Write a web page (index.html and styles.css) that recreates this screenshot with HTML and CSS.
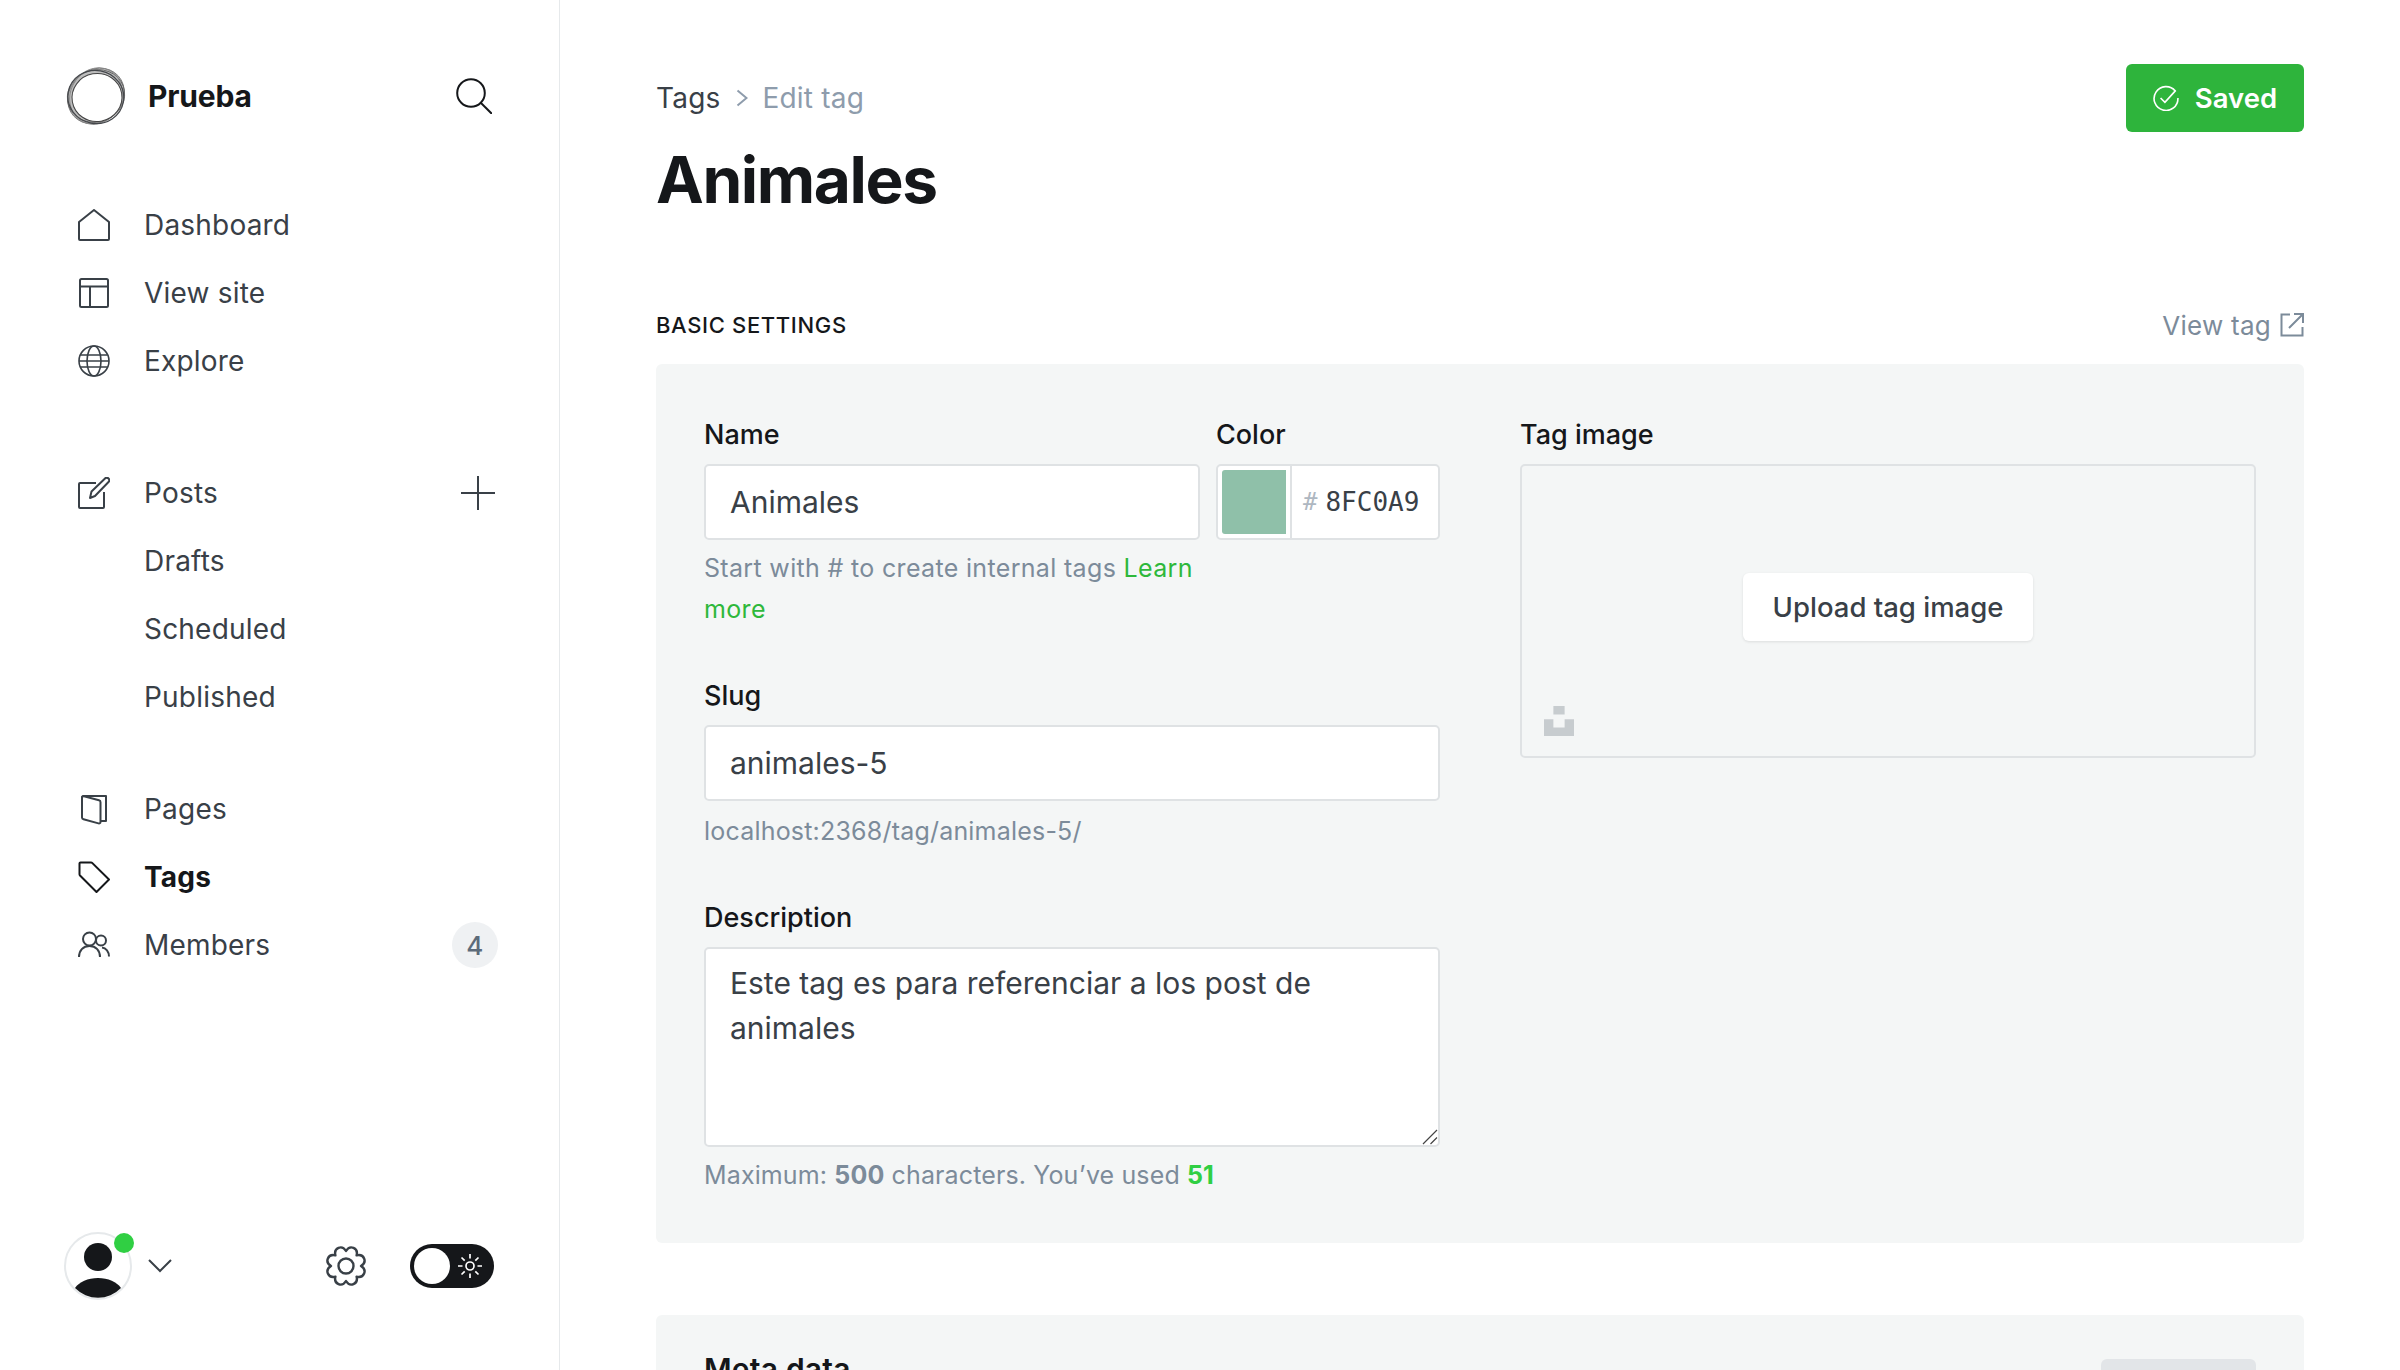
FILE: index.html
```html
<!DOCTYPE html>
<html lang="en">
<head>
<meta charset="utf-8">
<title>Animales - Tags</title>
<link rel="stylesheet" href="styles.css">
</head>
<body>
<div class="app">
  <aside class="sidebar">
    <div class="brand">
      <div class="brand-left">
        <svg class="logo" viewBox="0 0 60 60" fill="none" stroke="#3a3d42">
          <ellipse cx="30" cy="30" rx="30" ry="26" fill="#bdbdbd" stroke="#777" stroke-width=".9" transform="rotate(-42 30 30)"/>
          <ellipse cx="30" cy="30" rx="29" ry="26" stroke="#666" stroke-width=".9" transform="rotate(-20 30 30)"/>
          <ellipse cx="30" cy="30" rx="29" ry="25.500" stroke="#888" stroke-width=".9" transform="rotate(-62 30 30)"/>
          <ellipse cx="30" cy="31" rx="28" ry="26.500" stroke="#44474b" stroke-width="1.200" transform="rotate(10 30 30)"/>
          <ellipse cx="31" cy="31.500" rx="25" ry="24" fill="#fff" stroke="#444" stroke-width="1" transform="rotate(-10 31 31.500)"/>
        </svg>
        <span class="brand-name">Prueba</span>
      </div>
      <svg class="search" viewBox="0 0 36 36" fill="none" stroke="#15171a" stroke-width="2">
        <circle cx="15" cy="15" r="13.800"/><path d="M25 25l10.500 10.500" stroke-linecap="round"/>
      </svg>
    </div>

    <nav class="nav">
      <ul class="nav-group">
        <li class="nav-item">
          <svg class="nav-icon" viewBox="0 0 32 32"><path d="M1 13L16 1l15 12v17a1 1 0 0 1-1 1H2a1 1 0 0 1-1-1z"/></svg>
          <span>Dashboard</span>
        </li>
        <li class="nav-item">
          <svg class="nav-icon" viewBox="0 0 32 32"><rect x="2" y="2" width="28" height="28" rx="1.500"/><path d="M2 9.500h28M12 9.500V30"/></svg>
          <span>View site</span>
        </li>
        <li class="nav-item">
          <svg class="nav-icon thin" viewBox="0 0 32 32"><circle cx="16" cy="16" r="15"/><ellipse cx="16" cy="16" rx="7" ry="15"/><path d="M2.500 10h27M1 16h30M2.500 22h27"/></svg>
          <span>Explore</span>
        </li>
      </ul>
      <ul class="nav-group">
        <li class="nav-item">
          <svg class="nav-icon" viewBox="0 0 32 32"><path d="M18 6H2a1 1 0 0 0-1 1v23a1 1 0 0 0 1 1h23a1 1 0 0 0 1-1V15"/><path d="M12 21l1.500-6.500L27 1.500a2.500 2.500 0 0 1 3.500 0 2.500 2.500 0 0 1 0 3.500L17 19z"/></svg>
          <span>Posts</span>
          <svg class="plus" viewBox="0 0 36 36"><path d="M18 1v34M1 18h34"/></svg>
        </li>
        <li class="nav-item nav-sub">Drafts</li>
        <li class="nav-item nav-sub">Scheduled</li>
        <li class="nav-item nav-sub">Published</li>
      </ul>
      <ul class="nav-group nav-group-tight">
        <li class="nav-item">
          <svg class="nav-icon" viewBox="0 0 32 32"><path d="M4 4.500a1.500 1.500 0 0 1 1.500-1.500H28v25h-5.500"/><path d="M4 4.500a1.500 1.500 0 0 1 2-1.200l15 3.900a2 2 0 0 1 1.500 2V29a1.500 1.500 0 0 1-2 1.400L5.500 26.300A2 2 0 0 1 4 24.400z"/></svg>
          <span>Pages</span>
        </li>
        <li class="nav-item nav-active">
          <svg class="nav-icon" viewBox="0 0 32 32"><path d="M1.500 2.500a1 1 0 0 1 1-1h10.500a2 2 0 0 1 1.400.6L31 18.500 18.500 31 2 14.500a2 2 0 0 1-.5-1.400z"/></svg>
          <span>Tags</span>
        </li>
        <li class="nav-item">
          <svg class="nav-icon" viewBox="0 0 32 32"><circle cx="11.500" cy="10" r="6.500"/><path d="M1 28c0-6.500 4-11 10.500-11S22 21.500 22 28"/><circle cx="23" cy="11.500" r="5"/><path d="M24 18.500c4 .4 7 4 7 9"/></svg>
          <span>Members</span>
          <span class="badge">4</span>
        </li>
      </ul>
    </nav>

    <div class="side-foot">
      <div class="user">
        <div class="avatar">
          <svg viewBox="0 0 64 64"><circle cx="32" cy="23" r="14"/><path d="M9 54c4-6 13-10 23-10s19 4 23 10a32 32 0 0 1-46 0z"/></svg>
          <span class="status"></span>
        </div>
        <svg class="chev" viewBox="0 0 24 14" fill="none" stroke="#394047" stroke-width="2"><path d="M1 1l11 11L23 1"/></svg>
      </div>
      <div class="foot-right">
        <svg class="gear" viewBox="0 0 40 40" fill="none" stroke="#394047" stroke-width="2.400" stroke-linejoin="round">
          <circle cx="20" cy="20" r="7.500"/>
          <path d="M35 20C41.630 24.010 38.130 32.460 30.600 30.600 32.460 38.130 24.010 41.630 20 35 15.990 41.630 7.540 38.130 9.400 30.600 1.870 32.460-1.630 24.010 5 20-1.630 15.990 1.870 7.540 9.400 9.400 7.540 1.870 15.990-1.630 20 5 24.010-1.630 32.460 1.870 30.600 9.400 38.130 7.540 41.630 15.990 35 20z"/>
        </svg>
        <div class="toggle">
          <span class="knob"></span>
          <svg class="sun" viewBox="0 0 24 24" fill="none" stroke="#fff" stroke-width="1.700"><circle cx="12" cy="12" r="4"/><path d="M12 0v4.500M12 19.500V24M0 12h4.500M19.500 12H24M3.500 3.500l3.200 3.200M17.300 17.300l3.200 3.200M3.500 20.500l3.200-3.200M17.300 6.700l3.200-3.200"/></svg>
        </div>
      </div>
    </div>
  </aside>

  <main class="main">
    <header class="page-head">
      <div>
        <div class="crumbs">
          <span class="crumb">Tags</span>
          <svg class="crumb-sep" viewBox="0 0 12 18" fill="none" stroke="#8e9cac" stroke-width="2"><path d="M1.500 1.500L10.500 9l-9 7.500"/></svg>
          <span class="crumb-now">Edit tag</span>
        </div>
        <h1 class="title">Animales</h1>
      </div>
      <button class="saved">
        <svg viewBox="0 0 24 24" fill="none" stroke="#fff" stroke-width="1.500"><path d="M20.500 5.500A11 11 0 1 0 23 12"/><path d="M7 12l4 4 10-11"/></svg>
        Saved
      </button>
    </header>

    <div class="section-head">
      <h2 class="section-title">Basic settings</h2>
      <a class="view-tag">View tag
        <svg viewBox="0 0 24 24" fill="none" stroke="#7c8b9a" stroke-width="2"><path d="M10 1.500H1.500v21h21V14"/><path d="M9 15L23 1M14 1h9v9"/></svg>
      </a>
    </div>

    <section class="panel panel-basic">
      <div class="form-col">
        <div class="row-two">
          <div class="field-name">
            <label class="label">Name</label>
            <input class="input" value="Animales">
            <p class="help help-wrap">Start with # to create internal tags <a class="link">Learn more</a></p>
          </div>
          <div class="field-color">
            <label class="label">Color</label>
            <div class="color-box">
              <span class="swatch"></span>
              <span class="hash">#</span><span class="hex">8FC0A9</span>
            </div>
          </div>
        </div>
        <div class="field">
          <label class="label">Slug</label>
          <input class="input" value="animales-5">
          <p class="help help-slug">localhost:2368/tag/animales-5/</p>
        </div>
        <div class="field">
          <label class="label">Description</label>
          <div class="area-wrap">
            <textarea class="input textarea">Este tag es para referenciar a los post de animales</textarea>
            <svg class="grip" viewBox="0 0 16 16" fill="none" stroke="#444" stroke-width="1.200"><path d="M1 15L15 1M8.500 15L15 8.500"/></svg>
          </div>
          <p class="help help-count">Maximum: <b>500</b> characters. You’ve used <b class="used">51</b></p>
        </div>
      </div>
      <div class="image-col">
        <label class="label">Tag image</label>
        <div class="image-box">
          <button class="upload">Upload tag image</button>
          <svg class="unsplash" viewBox="0 0 32 32" fill="#c7cccf"><path d="M10 0h12v9H10zM0 14h10v9h12v-9h10v18H0z"/></svg>
        </div>
      </div>
    </section>

    <section class="panel panel-meta">
      <h3 class="meta-title">Meta data</h3>
      <span class="meta-btn"></span>
    </section>
  </main>
</div>
</body>
</html>
```
FILE: styles.css
```css
* { box-sizing: border-box; }
html, body { margin: 0; padding: 0; height: 100%; overflow: hidden; background: #fff; }
body { font-family: Inter, "Liberation Sans", sans-serif; color: #15171a; }
ul { list-style: none; margin: 0; padding: 0; }
p, h1, h2, h3 { margin: 0; }

.app { display: flex; height: 1370px; overflow: hidden; }

/* Sidebar */
.sidebar { width: 560px; flex: none; display: flex; flex-direction: column; border-right: 1px solid #e6e9eb; }
.brand { display: flex; align-items: center; justify-content: space-between; padding: 66px 67px 0 66px; }
.brand-left { display: flex; align-items: center; gap: 22px; }
.logo { width: 60px; height: 60px; }
.brand-name { font-size: 30px; font-weight: 700; letter-spacing: -0.2px; }
.search { width: 36px; height: 36px; }

.nav { margin-top: 65px; }
.nav-group { margin-bottom: 64px; }
.nav-group-tight { margin-top: -20px; }
.nav-item { display: flex; align-items: center; height: 68px; padding: 0 61px 0 78px; gap: 34px; font-size: 28px; color: #394047; letter-spacing: 0.2px; }
.nav-sub { padding-left: 144px; }
.nav-active { font-weight: 700; color: #15171a; }
.nav-active .nav-icon { stroke: #15171a; }
.nav-icon { width: 32px; height: 32px; flex: none; fill: none; stroke: #394047; stroke-width: 2; stroke-linejoin: round; }
.thin { stroke-width: 1.600; }
.plus { width: 36px; height: 36px; margin-left: auto; margin-right: 2px; fill: none; stroke: #394047; stroke-width: 2; }
.badge { margin-left: auto; width: 46px; height: 46px; border-radius: 50%; background: #eff1f3; color: #5d6b7a; font-size: 26px; font-weight: 500; display: flex; align-items: center; justify-content: center; }

.side-foot { margin-top: auto; display: flex; align-items: center; justify-content: space-between; padding: 0 65px 70px 64px; }
.user { display: flex; align-items: center; gap: 16px; }
.avatar { position: relative; width: 68px; height: 68px; border: 2px solid #e6e9eb; border-radius: 50%; }
.avatar svg { display: block; width: 64px; height: 64px; fill: #15171a; }
.status { position: absolute; top: -1px; right: -4px; width: 20px; height: 20px; border-radius: 50%; background: #30cf43; }
.chev { width: 24px; height: 14px; }
.foot-right { display: flex; align-items: center; gap: 44px; }
.gear { width: 40px; height: 40px; overflow: visible; }
.toggle { width: 84px; height: 44px; border-radius: 22px; background: #15171a; display: flex; align-items: center; justify-content: space-between; padding: 0 12px 0 4px; }
.knob { width: 36px; height: 36px; border-radius: 50%; background: #fff; }
.sun { width: 24px; height: 24px; }

/* Main */
.main { flex: 1; min-width: 0; padding: 64px 96px 0; }
.page-head { display: flex; justify-content: space-between; align-items: flex-start; }
.crumbs { display: flex; align-items: center; height: 34px; margin-top: 17px; font-size: 28px; letter-spacing: 0.2px; }
.crumb { color: #394047; }
.crumb-sep { width: 12px; height: 18px; margin: 0 15px; }
.crumb-now { color: #8e9cac; }
.title { font-size: 64px; line-height: 78px; font-weight: 700; letter-spacing: -1.400px; margin-top: 26px; }
.saved { display: flex; align-items: center; gap: 16px; height: 68px; width: 178px; justify-content: center; border: 0; border-radius: 6px; background: #2eb43c; color: #fff; font-family: inherit; font-size: 27.500px; font-weight: 600; }
.saved svg { width: 26px; height: 26px; }

.section-head { display: flex; justify-content: space-between; align-items: center; height: 32px; margin-top: 90px; }
.section-title { font-size: 22px; font-weight: 500; text-transform: uppercase; letter-spacing: 0.65px; }
.view-tag { display: flex; align-items: center; gap: 9px; font-size: 26px; color: #7c8b9a; letter-spacing: 0.25px; }
.view-tag svg { width: 24px; height: 24px; }

.panel { background: #f4f6f6; border-radius: 6px; padding: 48px; margin-top: 23px; }
.panel-basic { height: 879px; display: flex; gap: 80px; }
.form-col { width: 736px; flex: none; }
.image-col { flex: 1; }
.row-two { display: flex; gap: 16px; height: 261px; }
.field-name { width: 496px; }
.field-color { width: 224px; }
.field { height: 224px; }
.field + .field { height: auto; margin-top: -2px; }
.label { display: block; height: 52px; line-height: 46px; font-size: 27px; font-weight: 500; color: #15171a; }
.input { display: block; width: 100%; height: 76px; padding: 0 24px; border: 2px solid #dfe2e4; border-radius: 5px; background: #fff; font-family: inherit; font-size: 30px; color: #394047; outline: 0; }
.area-wrap { position: relative; }
.textarea { height: 200px; padding: 12px 24px; line-height: 45px; resize: none; }
.grip { position: absolute; right: 2px; bottom: 2px; width: 16px; height: 16px; }
.help { margin-top: 8px; font-size: 25px; line-height: 41px; color: #7c8b9a; letter-spacing: 0.2px; }
.help-wrap { margin-top: 8px; letter-spacing: 0.33px; }
.help-slug { margin-top: 10px; }
.help-count { letter-spacing: 0.13px; }
.help b { font-weight: 700; }
.link { color: #2eb83b; }
.used { color: #30cf43; }
.color-box { display: flex; align-items: center; height: 76px; padding: 5px 0 5px 4px; border: 2px solid #dfe2e4; border-radius: 5px; background: #fff; }
.swatch { width: 64px; height: 64px; margin-right: 4px; background: #8fc0a9; border-radius: 3px 0 0 3px; }
.hash { border-left: 2px solid #dfe2e4; height: 72px; margin: -5px 0; padding-left: 11px; line-height: 72px; font-family: "DejaVu Sans Mono", monospace; font-size: 24px; color: #aeb7c1; }
.hex { margin-left: 8px; font-family: "DejaVu Sans Mono", monospace; font-size: 26px; color: #394047; }

.image-box { position: relative; height: 294px; border: 2px solid #dfe2e4; border-radius: 5px; display: flex; align-items: center; justify-content: center; padding-bottom: 9px; }
.upload { height: 68px; width: 290px; border: 0; border-radius: 6px; background: #fff; box-shadow: 0 1px 3px rgba(0,0,0,.1); font-family: inherit; font-size: 27.500px; font-weight: 500; color: #394047; }
.unsplash { position: absolute; left: 22px; bottom: 20px; width: 30px; height: 30px; }

.panel-meta { position: relative; margin-top: 72px; height: 200px; }
.meta-title { font-size: 30px; font-weight: 600; line-height: 38px; margin-top: -13px; letter-spacing: 0.2px; }
.meta-btn { position: absolute; top: 44px; right: 48px; width: 155px; height: 68px; border-radius: 6px; background: #e2e5e8; }
```
